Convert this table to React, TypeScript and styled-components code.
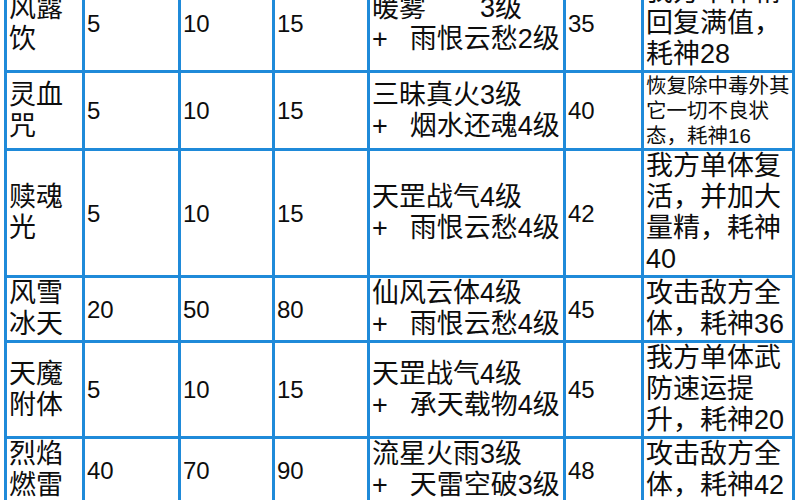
import React from 'react';
import styled, { createGlobalStyle } from 'styled-components';

const GlobalStyle = createGlobalStyle`
  html, body {
    margin: 0;
    padding: 0;
    background: #fff;
    overflow: hidden;
  }
`;

const SkillTable = styled.table`
  border-collapse: collapse;
  table-layout: fixed;
  width: 788px;
  margin: -26px 0 0 4px;
  font-family: "Liberation Sans", "Noto Sans CJK SC", sans-serif;
  color: #0d0d0d;
`;

const Col = styled.col<{ $w: number }>`
  width: ${(p) => p.$w}px;
`;

const Row = styled.tr<{ $h: number }>`
  height: ${(p) => p.$h}px;
`;

const Cell = styled.td<{ $num?: boolean; $small?: boolean }>`
  border: 3px solid #1f8ad9;
  padding: 0 1px 0 2px;
  vertical-align: middle;
  font-size: ${(p) => (p.$num ? '24px' : p.$small ? '20.5px' : '27px')};
  line-height: ${(p) => (p.$small ? '25px' : '31px')};
  overflow: hidden;
`;

const ComboLine = styled.div`
  white-space: nowrap;
`;

const Plus = styled.span`
  display: inline-block;
  margin-right: 22px;
`;

interface Skill {
  name: string;
  a: string;
  b: string;
  c: string;
  first: string;
  second: string;
  level: string;
  effect: string;
  small?: boolean;
  h: number;
}

// h = distance between row lines in the picture, minus the border
const skills: Skill[] = [
  { name: '风露饮', a: '5', b: '10', c: '15', first: '暖雾\u2003\u20033级', second: '雨恨云愁2级', level: '35', effect: '我方单体精回复满值，耗神28', h: 86 },
  { name: '灵血咒', a: '5', b: '10', c: '15', first: '三昧真火3级', second: '烟水还魂4级', level: '40', effect: '恢复除中毒外其它一切不良状态，耗神16', small: true, h: 78 },
  { name: '赎魂光', a: '5', b: '10', c: '15', first: '天罡战气4级', second: '雨恨云愁4级', level: '42', effect: '我方单体复活，并加大量精，耗神40', h: 122 },
  { name: '风雪冰天', a: '20', b: '50', c: '80', first: '仙风云体4级', second: '雨恨云愁4级', level: '45', effect: '攻击敌方全体，耗神36', h: 61 },
  { name: '天魔附体', a: '5', b: '10', c: '15', first: '天罡战气4级', second: '承天载物4级', level: '45', effect: '我方单体武防速运提升，耗神20', h: 91 },
  { name: '烈焰燃雷', a: '40', b: '70', c: '90', first: '流星火雨3级', second: '天雷空破3级', level: '48', effect: '攻击敌方全体，耗神42', h: 62 },
  { name: '酒神', a: '40', b: '70', c: '90', first: '醉仙望月4级', second: '天雷空破4级', level: '50', effect: '攻击敌方全体，耗神48', h: 62 },
];

const widths = [78, 96, 94, 95, 196, 78, 151];

const App: React.FC = () => {
  return (
    <>
      <GlobalStyle />
      <SkillTable>
        <colgroup>
          {widths.map((w, i) => (
            <Col key={i} $w={w} />
          ))}
        </colgroup>
        <tbody>
          {skills.map((s) => (
            <Row key={s.name} $h={s.h}>
              <Cell>{s.name}</Cell>
              <Cell $num>{s.a}</Cell>
              <Cell $num>{s.b}</Cell>
              <Cell $num>{s.c}</Cell>
              <Cell>
                <ComboLine>{s.first}</ComboLine>
                <ComboLine>
                  <Plus>+</Plus>
                  {s.second}
                </ComboLine>
              </Cell>
              <Cell $num>{s.level}</Cell>
              <Cell $small={s.small}>{s.effect}</Cell>
            </Row>
          ))}
        </tbody>
      </SkillTable>
    </>
  );
};

export default App;
